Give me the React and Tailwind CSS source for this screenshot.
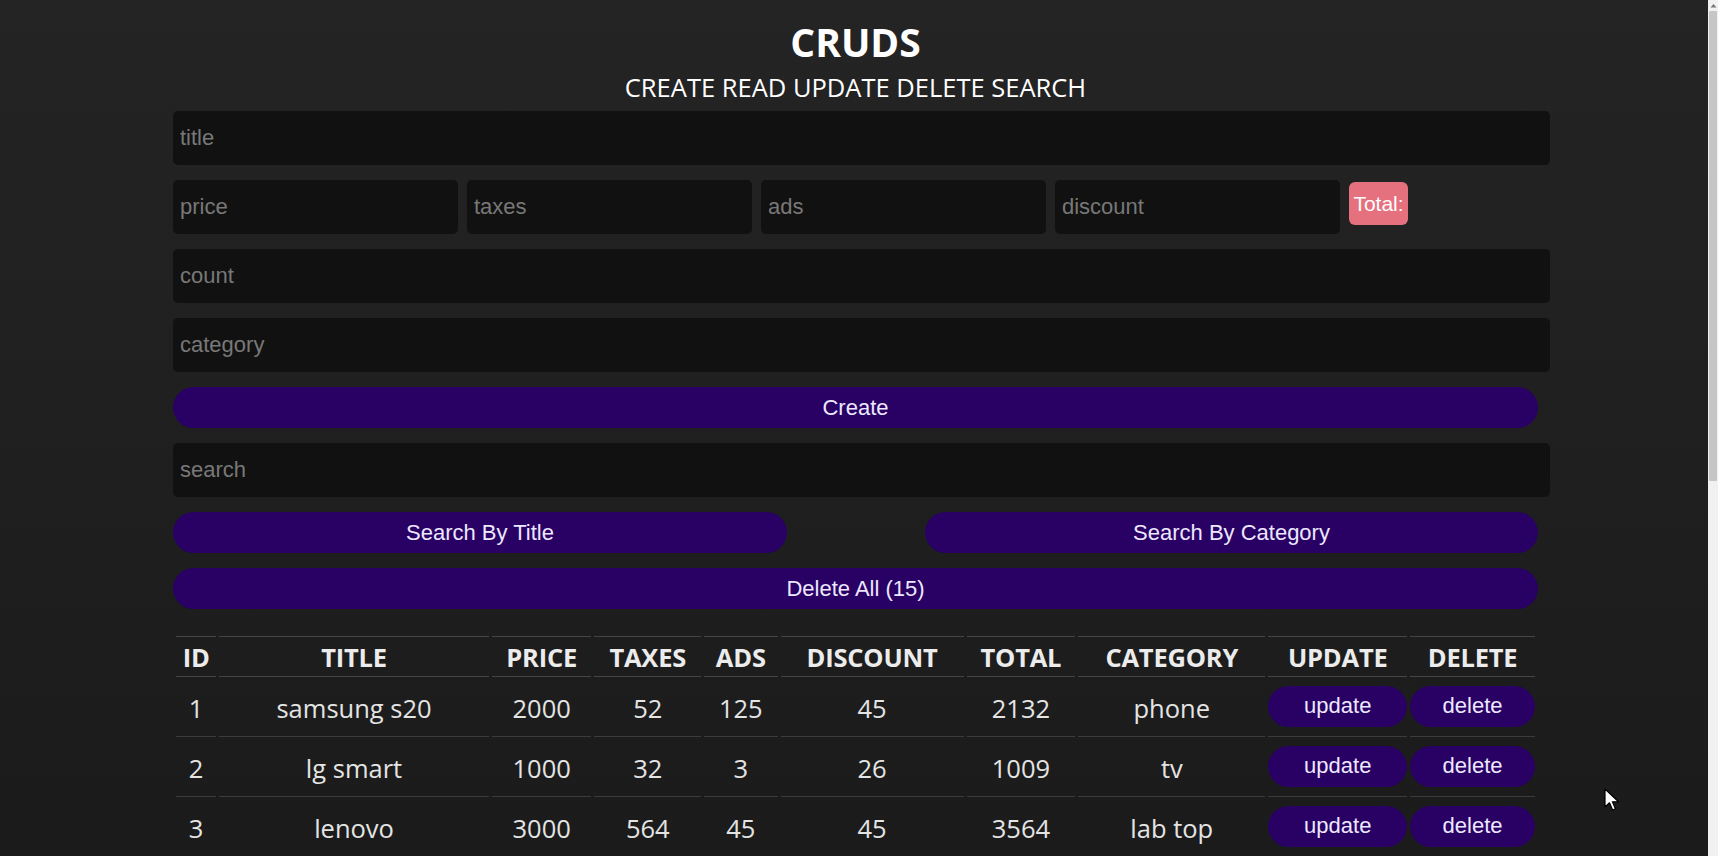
export default function App() {
  const rows = [
    [1, "samsung s20", 2000, 52, 125, 45, 2132, "phone"],
    [2, "lg smart", 1000, 32, 3, 26, 1009, "tv"],
    [3, "lenovo", 3000, 564, 45, 45, 3564, "lab top"],
  ];
  const heads = ["ID", "TITLE", "PRICE", "TAXES", "ADS", "DISCOUNT", "TOTAL", "CATEGORY", "UPDATE", "DELETE"];
  const widths = [40, 268, 99, 106, 73, 182, 108, 186, 138, 124];

  const inputCls =
    "block h-[54px] rounded-[5px] bg-[#111111] px-[7px] text-[22px] text-[#cccccc] placeholder:text-[#787878] outline-none border-0 font-['Liberation_Sans',Arial,sans-serif]";
  const btnCls =
    "h-[41px] rounded-full bg-[#290063] text-[22px] text-[#ece8ff] font-['Liberation_Sans',Arial,sans-serif] flex items-center justify-center";

  return (
    <div className="flex h-[856px] w-full overflow-hidden">
      <div className="relative flex-1 bg-linear-to-b from-[#242424] to-[#1b1b1b] font-['Open_Sans',sans-serif] text-[#ececec]">
        <div className="ml-[173px] w-[1365px] pt-[19px]">
          <h1 className="text-center text-[39px] font-bold leading-[46px] text-white">CRUDS</h1>
          <p className="mt-[6px] text-center text-[25.5px] leading-[33px] text-white">CREATE READ UPDATE DELETE SEARCH</p>

          <div className="mt-[7px] flex flex-col gap-[15px]">
            <input className={`${inputCls} w-[1377px]`} placeholder="title" />
            <div className="flex items-start gap-[9px]">
              <input className={`${inputCls} w-[285px]`} placeholder="price" />
              <input className={`${inputCls} w-[285px]`} placeholder="taxes" />
              <input className={`${inputCls} w-[285px]`} placeholder="ads" />
              <input className={`${inputCls} w-[285px]`} placeholder="discount" />
              <div className="mt-[2px] flex h-[43px] w-[59px] items-center justify-center rounded-[6px] bg-[#e5717f] text-[21px] text-white font-['Liberation_Sans',Arial,sans-serif]">
                Total:
              </div>
            </div>
            <input className={`${inputCls} w-[1377px]`} placeholder="count" />
            <input className={`${inputCls} w-[1377px]`} placeholder="category" />
            <button className={`${btnCls} w-full`}>Create</button>
            <input className={`${inputCls} w-[1377px]`} placeholder="search" />
            <div className="flex justify-between">
              <button className={`${btnCls} w-[614px]`}>Search By Title</button>
              <button className={`${btnCls} w-[613px]`}>Search By Category</button>
            </div>
            <button className={`${btnCls} w-full`}>Delete All (15)</button>
          </div>

          <table className="mt-[27px] w-full table-fixed border-separate border-spacing-x-[3px] border-spacing-y-0">
            <colgroup>
              {widths.map((w, i) => (
                <col key={i} style={{ width: `${w}px` }} />
              ))}
            </colgroup>
            <thead>
              <tr>
                {heads.map((h) => (
                  <th
                    key={h}
                    className="h-[41px] whitespace-nowrap border-y border-[#454545] p-0 pt-[2px] text-center text-[25.5px] font-bold leading-[37px] tracking-[-0.2px] text-[#ececec]"
                  >
                    {h}
                  </th>
                ))}
              </tr>
            </thead>
            <tbody>
              {rows.map((r) => (
                <tr key={r[0]}>
                  {r.map((c, i) => (
                    <td
                      key={i}
                      className="h-[60px] whitespace-nowrap border-b border-[#3c3c3c] p-0 pt-[4px] text-center text-[25.5px] leading-[55px] text-[#e4e4e4]"
                    >
                      {c}
                    </td>
                  ))}
                  <td className="h-[60px] border-b border-[#3c3c3c] p-0 align-middle">
                    <button className={`${btnCls} w-full bg-[#1e0058] pb-[3px] text-[21px] text-[#dcd6ff]`}>update</button>
                  </td>
                  <td className="h-[60px] border-b border-[#3c3c3c] p-0 align-middle">
                    <button className={`${btnCls} w-full bg-[#1e0058] pb-[3px] text-[21px] text-[#dcd6ff]`}>delete</button>
                  </td>
                </tr>
              ))}
            </tbody>
          </table>
        </div>

        <svg className="absolute left-[1604px] top-[788px]" width="18" height="24" viewBox="0 0 18 24">
          <path d="M1 1 L1 19 L5.5 14.8 L8.6 22 L11.4 20.8 L8.4 13.8 L14.5 13.8 Z" fill="#ffffff" stroke="#000000" strokeWidth="1.2" strokeLinejoin="round" />
        </svg>
      </div>

      <div className="flex w-[10px] flex-col bg-[#f1f1f1]">
        <div className="flex h-[11px] items-center justify-center">
          <svg width="7" height="5" viewBox="0 0 7 5">
            <path d="M0.5 4.5 L3.5 1 L6.5 4.5 Z" fill="#777777" />
          </svg>
        </div>
        <div className="mx-[1px] h-[470px] rounded-[1px] bg-[#c6c6c6]" />
      </div>
    </div>
  );
}
